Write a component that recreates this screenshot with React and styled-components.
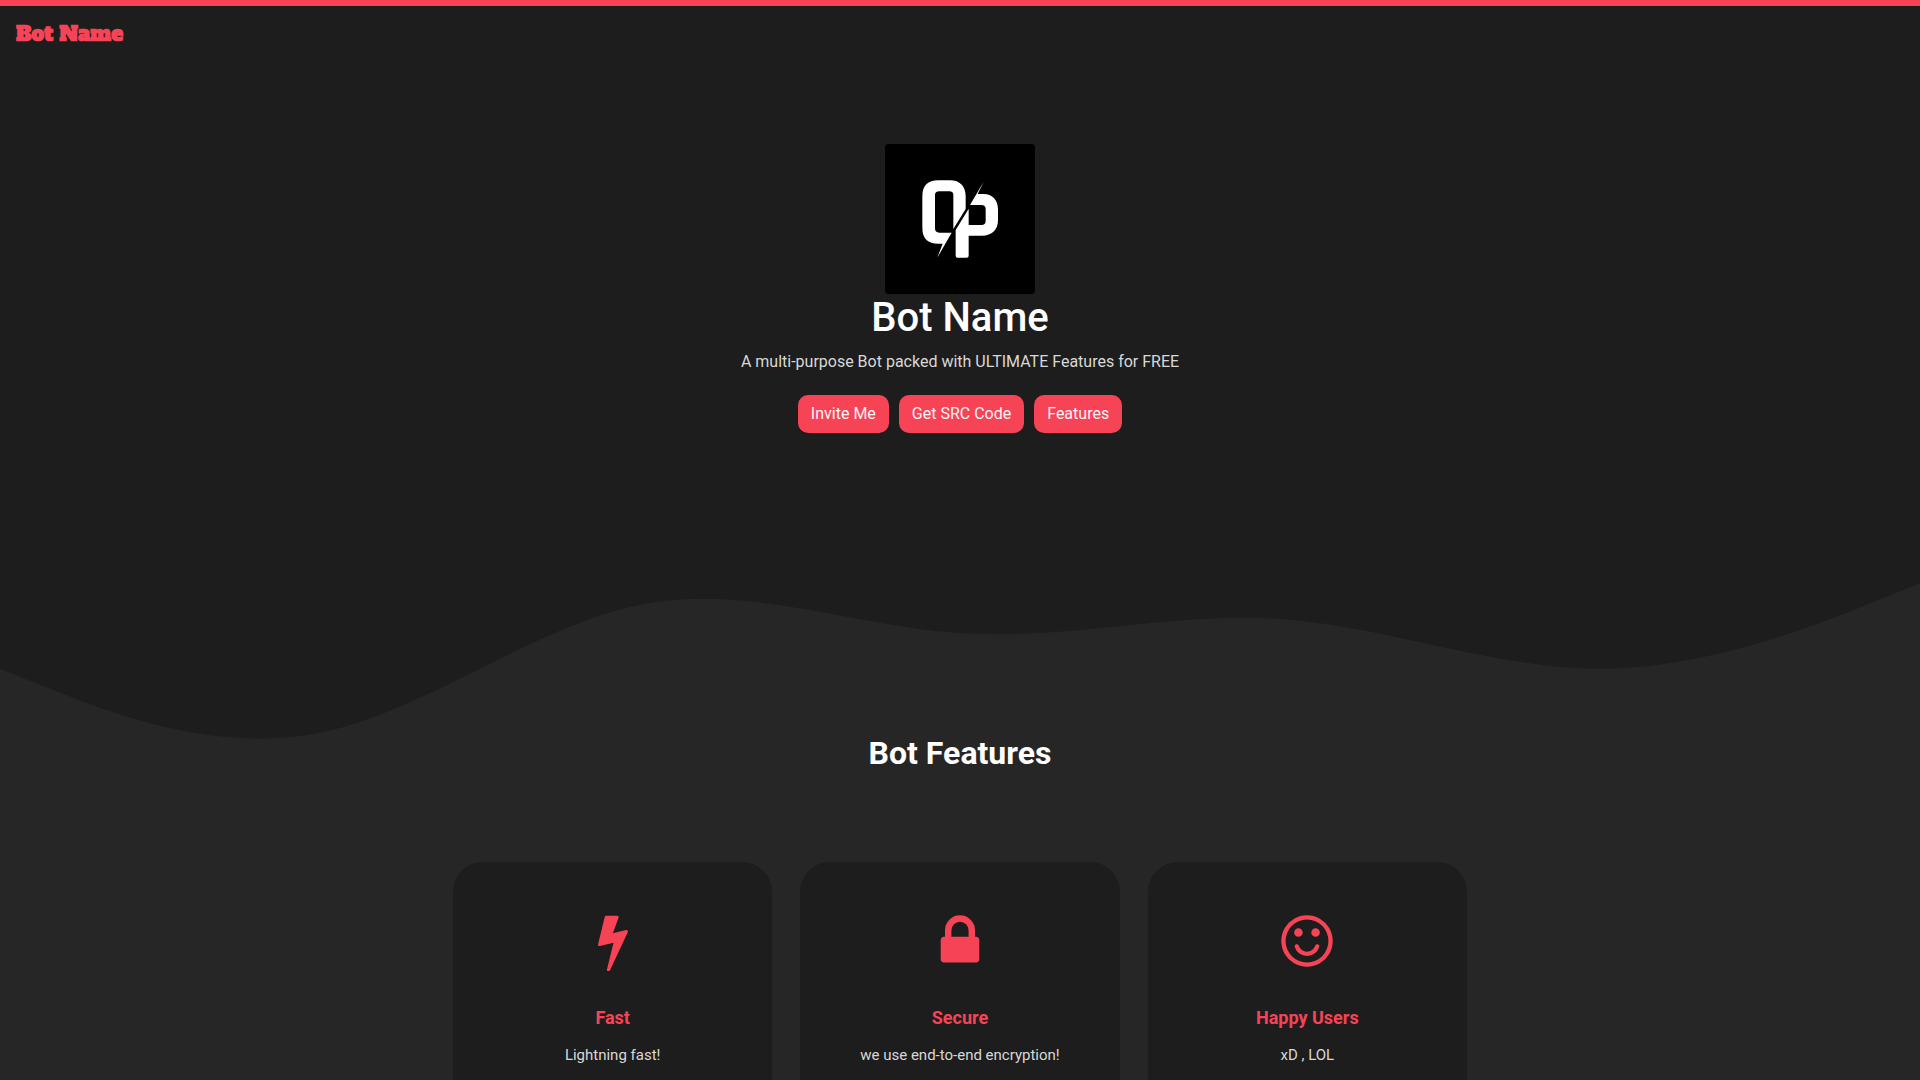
import React from "react";
import styled, { createGlobalStyle } from "styled-components";

const colors = {
  accent: "#f74356",
  dark: "#1d1d1d",
  panel: "#262626",
  muted: "#d8d8d8",
};

const GlobalStyle = createGlobalStyle`
  *, *::before, *::after { box-sizing: border-box; }
  html { scrollbar-width: none; }
  body {
    margin: 0;
    background: ${colors.panel};
    color: #fff;
    font-family: Roboto, "Liberation Sans", sans-serif;
    font-size: 16px;
    line-height: 24px;
  }
  h1, h2, h3, p { margin: 0; }
`;

const Top = styled.div`
  background: ${colors.dark};
  border-top: 6px solid ${colors.accent};
`;

const Navbar = styled.nav`
  display: flex;
  padding: 12px 16px;
`;

const Brand = styled.a`
  color: ${colors.accent};
  font-family: "Alfa Slab One", "DejaVu Serif", serif;
  font-size: 20px;
  font-weight: 700;
  line-height: 32px;
  text-decoration: none;
`;

const Hero = styled.header`
  display: flex;
  flex-direction: column;
  align-items: center;
  padding: 82px 16px 145px;
  text-align: center;
`;

const Logo = styled.svg`
  display: block;
  width: 150px;
  height: 150px;
  border-radius: 4px;
  background: #000;
`;

const Title = styled.h1`
  font-size: 40px;
  font-weight: 500;
  line-height: 48px;
`;

const Tagline = styled.p`
  margin-top: 8px;
  color: ${colors.muted};
`;

const Actions = styled.div`
  display: flex;
  flex-wrap: wrap;
  justify-content: center;
  gap: 10px;
  margin-top: 21px;
`;

const ActionLink = styled.a`
  padding: 7px 13px;
  border-radius: 10px;
  background: ${colors.accent};
  color: #f5f5f5;
  text-decoration: none;
`;

const Wave = styled.svg`
  display: block;
  width: 100%;
  height: auto;
  margin-bottom: -25px;
`;

const Features = styled.section`
  position: relative;
  padding: 0 16px 80px;
`;

const SectionTitle = styled.h2`
  font-size: 32px;
  font-weight: 700;
  line-height: 40px;
  text-align: center;
`;

const CardGrid = styled.div`
  display: grid;
  grid-template-columns: repeat(auto-fit, minmax(260px, 1fr));
  gap: 28px;
  max-width: 1014px;
  margin: 89px auto 0;
`;

const Card = styled.article`
  display: flex;
  flex-direction: column;
  align-items: center;
  padding: 49px 24px;
  border-radius: 30px;
  background: ${colors.dark};
  text-align: center;
`;

const CardIcon = styled.svg`
  width: 60px;
  height: 60px;
  fill: ${colors.accent};
`;

const CardTitle = styled.h3`
  margin-top: 35px;
  color: ${colors.accent};
  font-size: 18px;
  font-weight: 700;
  line-height: 24px;
`;

const CardText = styled.p`
  margin-top: 13px;
  color: ${colors.muted};
  font-size: 15px;
  line-height: 24px;
`;

const actions = [
  { label: "Invite Me", href: "#invite" },
  { label: "Get SRC Code", href: "#source" },
  { label: "Features", href: "#features" },
];

const features = [
  {
    title: "Fast",
    text: "Lightning fast!",
    viewBox: "0 -14 1792 1792",
    path: "M1333 566q18 20 7 44l-540 1157q-13 25-42 25-4 0-14-2-17-5-25.5-19t-4.5-30l197-808-406 101q-4 1-12 1-18 0-31-11-18-15-13-39l201-825q4-14 16-23t28-9h328q19 0 32 12.5t13 29.5q0 8-5 18l-171 463 396-98q8-2 12-2 19 0 34 15z",
  },
  {
    title: "Secure",
    text: "we use end-to-end encryption!",
    viewBox: "0 0 1792 1792",
    path: "M640 768h512v-192q0-106-75-181t-181-75-181 75-75 181v192zm832 96v576q0 40-28 68t-68 28h-960q-40 0-68-28t-28-68v-576q0-40 28-68t68-28h32v-192q0-184 132-316t316-132 316 132 132 316v192h32q40 0 68 28t28 68z",
  },
  {
    title: "Happy Users",
    text: "xD , LOL",
    viewBox: "0 0 1792 1792",
    path: "M1262 1075q-37 121-138 195t-228 74-228-74-138-195q-8-25 4-48.5t38-31.5q25-8 48.5 4t31.5 38q25 80 92.5 129.5t151.5 49.5 151.5-49.5 92.5-129.5q8-26 32-38t49-4 37 31.5 4 48.5zm-494-435q0 53-37.5 90.5t-90.5 37.5-90.5-37.5-37.5-90.5 37.5-90.5 90.5-37.5 90.5 37.5 37.5 90.5zm512 0q0 53-37.5 90.5t-90.5 37.5-90.5-37.5-37.5-90.5 37.5-90.5 90.5-37.5 90.5 37.5 37.5 90.5zm256 256q0-130-51-248.5t-136.5-204-204-136.5-248.5-51-248.5 51-204 136.5-136.5 204-51 248.5 51 248.5 136.5 204 204 136.5 248.5 51 248.5-51 204-136.5 136.5-204 51-248.5zm128 0q0 209-103 385.5t-279.5 279.5-385.5 103-385.5-103-279.5-279.5-103-385.5 103-385.5 279.5-279.5 385.5-103 385.5 103 279.5 279.5 103 385.5z",
  },
];

export default function App() {
  return (
    <>
      <GlobalStyle />
      <Top>
        <Navbar>
          <Brand href="#">Bot Name</Brand>
        </Navbar>
        <Hero>
          <Logo viewBox="45 42 450 450" fill="#fff" role="img" aria-label="Bot logo">
            <path d="M205 151H240C270 151 287 169 287 198V237L250 297V195Q250 184 238 184H208Q195 184 195 195V295Q195 308 208 308H245L202 383L218 341H205Q157 341 157 293V198Q157 151 205 151Z" />
            <path d="M341 155L323 192H340C368 192 384 210 384 238V270C384 300 366 317 336 317H296V377Q296 383 290 383H262Q257 383 257 377V300L296 236V285H334Q347 285 347 272V237Q347 225 334 225H300Z" />
          </Logo>
          <Title>Bot Name</Title>
          <Tagline>A multi-purpose Bot packed with ULTIMATE Features for FREE</Tagline>
          <Actions>
            {actions.map((a) => (
              <ActionLink key={a.label} href={a.href}>
                {a.label}
              </ActionLink>
            ))}
          </Actions>
        </Hero>
        <Wave viewBox="0 124 1440 135" fill={colors.panel} aria-hidden="true">
          <path d="M0 192L40 208C80 224 160 256 240 240C320 224 400 160 480 144C560 128 640 160 720 165.3C800 171 880 149 960 154.7C1040 160 1120 192 1200 192C1280 192 1360 160 1400 144L1440 128V320H0Z" />
        </Wave>
      </Top>
      <Features id="features">
        <SectionTitle>Bot Features</SectionTitle>
        <CardGrid>
          {features.map((f) => (
            <Card key={f.title}>
              <CardIcon viewBox={f.viewBox} aria-hidden="true">
                <path d={f.path} />
              </CardIcon>
              <CardTitle>{f.title}</CardTitle>
              <CardText>{f.text}</CardText>
            </Card>
          ))}
        </CardGrid>
      </Features>
    </>
  );
}
